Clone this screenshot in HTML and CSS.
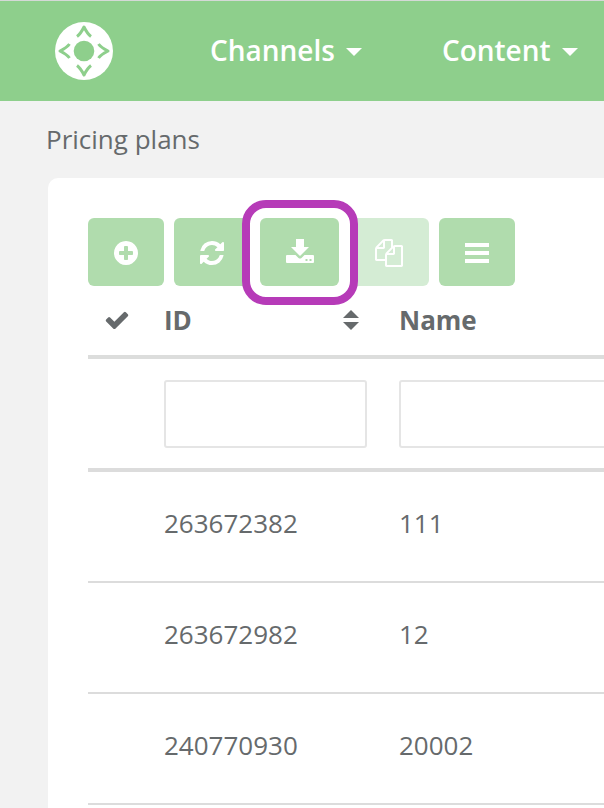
FILE: index.html
```html
<!DOCTYPE html>
<html lang="en">
<head>
<meta charset="utf-8">
<meta name="viewport" content="width=device-width, initial-scale=1">
<title>Pricing plans</title>
<link rel="stylesheet" href="styles.css">
</head>
<body>
<header class="topbar">
  <a class="logo" href="#" aria-label="Home">
    <svg viewBox="0 0 58 58" width="58" height="58" aria-hidden="true">
      <circle cx="29" cy="29" r="29" fill="#fff"/>
      <circle class="logo-mark" cx="29" cy="29" r="10.3"/>
      <path class="logo-line" d="M22 14.500Q25.500 12 29 5Q32.500 12 36 14.500M22 43.500Q25.500 46 29 53Q32.500 46 36 43.500M14.500 22Q12 25.500 5 29Q12 32.500 14.500 36M43.500 22Q46 25.500 53 29Q46 32.500 43.500 36"/>
    </svg>
  </a>
  <nav class="menu">
    <a class="menu-item" href="#">Channels<span class="caret"></span></a>
    <a class="menu-item" href="#">Content<span class="caret"></span></a>
  </nav>
</header>
<main class="page">
  <h1 class="title">Pricing plans</h1>
  <section class="panel">
    <div class="toolbar">
      <button class="tool" type="button" aria-label="Add">
        <svg class="icon" viewBox="0 0 1792 1792" aria-hidden="true"><path d="M1344 960v-128q0-26-19-45t-45-19h-256v-256q0-26-19-45t-45-19h-128q-26 0-45 19t-19 45v256h-256q-26 0-45 19t-19 45v128q0 26 19 45t45 19h256v256q0 26 19 45t45 19h128q26 0 45-19t19-45v-256h256q26 0 45-19t19-45zm320-64q0 209-103 385.500t-279.500 279.500-385.500 103-385.500-103-279.500-279.500-103-385.500 103-385.500 279.500-279.500 385.500-103 385.500 103 279.500 279.500 103 385.500z"/></svg>
      </button>
      <button class="tool" type="button" aria-label="Refresh">
        <svg class="icon" viewBox="0 0 1792 1792" aria-hidden="true"><path d="M1639 1056q0 5-1 7-64 268-268 434.500t-478 166.500q-146 0-282.500-55t-243.500-157l-129 129q-19 19-45 19t-45-19-19-45v-448q0-26 19-45t45-19h448q26 0 45 19t19 45-19 45l-137 137q71 66 161 102t187 36q134 0 250-65t186-179q11-17 53-117 8-23 30-23h192q13 0 22.500 9.500t9.500 22.500zm25-800v448q0 26-19 45t-45 19h-448q-26 0-45-19t-19-45 19-45l138-138q-148-137-349-137-134 0-250 65t-186 179q-11 17-53 117-8 23-30 23h-199q-13 0-22.500-9.500t-9.500-22.500v-7q65-268 270-434.500t480-166.500q146 0 284 55.500t245 156.500l130-129q19-19 45-19t45 19 19 45z"/></svg>
      </button>
      <div class="highlight">
        <button class="tool tool-wide" type="button" aria-label="Download">
          <svg class="icon" viewBox="0 0 28 28" aria-hidden="true"><path fill-rule="evenodd" d="M10 0h8v8h5l-9 9-9-9h5zM1 16h8.500l3 3q1.500 1.200 3 0l3-3h8.500q1 0 1 1v6q0 1-1 1h-26q-1 0-1-1v-6q0-1 1-1zM19.500 20v2h2v-2zM23.500 20v2h2v-2z"/></svg>
        </button>
      </div>
      <button class="tool tool-wide" type="button" aria-label="Copy" disabled>
        <svg class="icon" viewBox="0 0 1792 1792" aria-hidden="true"><path d="M1696 384q40 0 68 28t28 68v1216q0 40-28 68t-68 28h-960q-40 0-68-28t-28-68v-288h-544q-40 0-68-28t-28-68v-672q0-40 20-88t48-76l408-408q28-28 76-48t88-20h416q40 0 68 28t28 68v328q68-40 128-40h416zm-544 213l-299 299h299v-299zm-640-384l-299 299h299v-299zm196 647l316-316v-416h-384v416q0 40-28 68t-68 28h-416v640h512v-256q0-40 20-88t48-76zm956 804v-1152h-384v416q0 40-28 68t-68 28h-416v640h896z"/></svg>
      </button>
      <button class="tool" type="button" aria-label="Menu">
        <svg class="icon" viewBox="0 0 28 28" aria-hidden="true"><path d="M2 4h24v4H2zM2 12h24v4H2zM2 20h24v4H2z"/></svg>
      </button>
    </div>
    <table class="grid">
      <colgroup><col class="col-check"><col class="col-id"><col></colgroup>
      <thead>
        <tr class="heads">
          <th scope="col" aria-label="Selected"><svg class="check" viewBox="0 0 1792 1792" aria-hidden="true"><path d="M1671 566q0 40-28 68l-724 724-136 136q-28 28-68 28t-68-28l-136-136-362-362q-28-28-28-68t28-68l136-136q28-28 68-28t68 28l294 295 656-657q28-28 68-28t68 28l136 136q28 28 28 68z"/></svg></th>
          <th scope="col"><span class="sortable">ID<svg class="sort" viewBox="0 0 16 20" aria-hidden="true"><path d="M0 8L8 0l8 8zM0 12h16l-8 8z"/></svg></span></th>
          <th scope="col">Name</th>
        </tr>
        <tr class="filters">
          <td></td>
          <td><input class="filter" type="text" aria-label="Filter by ID"></td>
          <td><input class="filter" type="text" aria-label="Filter by name"></td>
        </tr>
      </thead>
      <tbody>
        <tr><td></td><td>263672382</td><td>111</td></tr>
        <tr><td></td><td>263672982</td><td>12</td></tr>
        <tr><td></td><td>240770930</td><td>20002</td></tr>
      </tbody>
    </table>
  </section>
</main>
</body>
</html>
```
FILE: styles.css
```css
* {
  box-sizing: border-box;
}

body {
  margin: 0;
  overflow-x: hidden;
  background: #f2f2f2;
  color: #666a6c;
  font-family: "Open Sans", "Liberation Sans", sans-serif;
  font-size: 26px;
  line-height: 36px;
}

/* The page scrolls without a visible bar. */
html {
  scrollbar-width: none;
}

.topbar {
  display: flex;
  align-items: center;
  gap: 97px;
  height: 101px;
  padding-left: 55px;
  border-top: 1px solid #d5d9d7;
  background: #8ecf8c;
}

.logo {
  display: flex;
  flex: none;
}

.logo-mark {
  fill: #8ecf8c;
}

.logo-line {
  fill: none;
  stroke: #8ecf8c;
  stroke-width: 3;
  stroke-linejoin: round;
}

.menu {
  display: flex;
  gap: 80px;
  padding-bottom: 2px;
}

.menu-item {
  display: flex;
  align-items: center;
  gap: 11px;
  color: #fff;
  font-size: 28px;
  font-weight: 600;
  text-decoration: none;
}

.caret {
  margin-top: 4px;
  border: 8px solid transparent;
  border-top-color: #fff;
  border-bottom: 0;
}

.page {
  padding-left: 46px;
}

.title {
  margin: 0;
  padding: 20px 0 21px;
  font-size: 26px;
  font-weight: 400;
}

.panel {
  margin-left: 2px;
  padding: 40px 0 40px 40px;
  overflow: hidden;
  border-radius: 10px 0 0 10px;
  background: #fff;
}

.toolbar {
  display: flex;
  gap: 10px;
}

.tool {
  display: flex;
  align-items: center;
  justify-content: center;
  width: 76px;
  height: 68px;
  padding: 2px 0 0;
  border: 0;
  border-radius: 6px;
  background: #b0dcad;
}

.tool-wide {
  width: 80px;
}

.highlight .tool-wide {
  width: 79px;
}

.tool:disabled {
  background: #d4ecd4;
}

.icon {
  width: 28px;
  height: 28px;
  fill: #fff;
}

.highlight {
  position: relative;
  z-index: 1;
}

.highlight::before {
  content: "";
  position: absolute;
  inset: -18px -19px -19px -18px;
  z-index: -1;
  border: 8px solid #b63bb8;
  border-radius: 24px;
  background: #fff;
}

.grid {
  width: 100%;
  min-width: 720px;
  border-collapse: separate;
  border-spacing: 0;
  table-layout: fixed;
}

.col-check {
  width: 76px;
}

.col-id {
  width: 235px;
}

.grid th,
.grid td {
  padding: 0 32px 0 0;
  text-align: left;
}

.grid .heads th {
  height: 73px;
  padding-bottom: 1px;
  border-bottom: 4px solid #dcdddc;
  font-weight: 700;
}

.check {
  display: block;
  width: 26px;
  height: 26px;
  margin-left: 16px;
  fill: #666a6c;
}

.sortable {
  display: flex;
  align-items: center;
  justify-content: space-between;
  padding-right: 8px;
}

.sort {
  width: 16px;
  height: 20px;
  fill: #666a6c;
}

.filters td {
  height: 113px;
  border-bottom: 4px solid #dcdcdc;
}

.filter {
  display: block;
  width: 100%;
  height: 68px;
  padding: 0 12px;
  border: 2px solid #e5e5e5;
  border-radius: 3px;
  background: #fff;
  color: inherit;
  font: inherit;
}

.grid tbody td {
  height: 111px;
  padding-bottom: 8px;
  border-bottom: 2px solid #dcdcdc;
}
```
